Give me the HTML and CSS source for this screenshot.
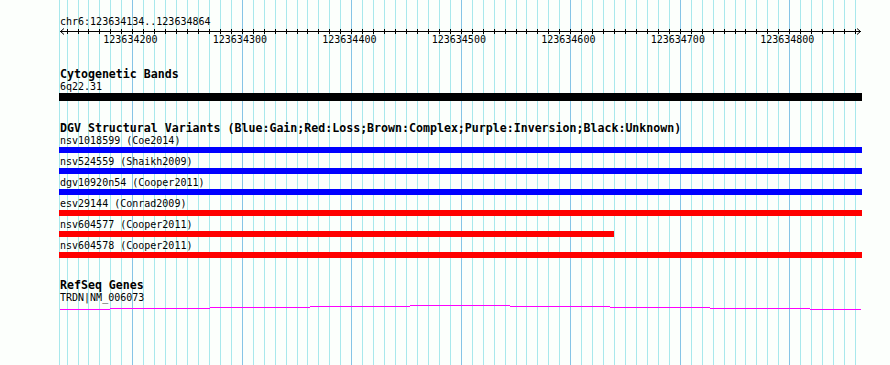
FILE: index.html
```html
<!DOCTYPE html>
<html lang="en">
  <head>
    <meta charset="UTF-8" />
    <title>chr6:123634134..123634864</title>
    <link rel="stylesheet" href="styles.css">
  </head>
  <body>
    <div class="browser">
      <!-- vertical grid: one line every 10 bp, darker every 100 bp -->
      <svg class="grid" width="890" height="365" shape-rendering="crispEdges">
        <path class="minor" d="M59.5 0V365M67.5 0V365M78.5 0V365M88.5 0V365M99.5 0V365M110.5 0V365M121.5 0V365M143.5 0V365M154.5 0V365M165.5 0V365M176.5 0V365M187.5 0V365M198.5 0V365M209.5 0V365M220.5 0V365M231.5 0V365M253.5 0V365M264.5 0V365M275.5 0V365M286.5 0V365M297.5 0V365M307.5 0V365M318.5 0V365M329.5 0V365M340.5 0V365M362.5 0V365M373.5 0V365M384.5 0V365M395.5 0V365M406.5 0V365M417.5 0V365M428.5 0V365M439.5 0V365M450.5 0V365M472.5 0V365M483.5 0V365M494.5 0V365M505.5 0V365M516.5 0V365M526.5 0V365M537.5 0V365M548.5 0V365M559.5 0V365M581.5 0V365M592.5 0V365M603.5 0V365M614.5 0V365M625.5 0V365M636.5 0V365M647.5 0V365M658.5 0V365M669.5 0V365M691.5 0V365M702.5 0V365M713.5 0V365M724.5 0V365M735.5 0V365M745.5 0V365M756.5 0V365M767.5 0V365M778.5 0V365M800.5 0V365M811.5 0V365M822.5 0V365M833.5 0V365M844.5 0V365M855.5 0V365"/>
        <path class="major" d="M132.5 0V365M242.5 0V365M351.5 0V365M461.5 0V365M570.5 0V365M680.5 0V365M789.5 0V365"/>
      </svg>

      <div class="tracks">
        <div class="location">chr6:123634134..123634864</div>
        <svg class="ruler" width="803" height="6" shape-rendering="crispEdges">
          <path d="M1 3.5H802"/>
          <path d="M8.5 1V6M19.5 1V6M29.5 1V6M40.5 1V6M51.5 1V6M62.5 1V6M73.5 1V6M84.5 1V6M95.5 1V6M106.5 1V6M117.5 1V6M128.5 1V6M139.5 1V6M150.5 1V6M161.5 1V6M172.5 1V6M183.5 1V6M194.5 1V6M205.5 1V6M216.5 1V6M227.5 1V6M238.5 1V6M248.5 1V6M259.5 1V6M270.5 1V6M281.5 1V6M292.5 1V6M303.5 1V6M314.5 1V6M325.5 1V6M336.5 1V6M347.5 1V6M358.5 1V6M369.5 1V6M380.5 1V6M391.5 1V6M402.5 1V6M413.5 1V6M424.5 1V6M435.5 1V6M446.5 1V6M457.5 1V6M467.5 1V6M478.5 1V6M489.5 1V6M500.5 1V6M511.5 1V6M522.5 1V6M533.5 1V6M544.5 1V6M555.5 1V6M566.5 1V6M577.5 1V6M588.5 1V6M599.5 1V6M610.5 1V6M621.5 1V6M632.5 1V6M643.5 1V6M654.5 1V6M665.5 1V6M676.5 1V6M686.5 1V6M697.5 1V6M708.5 1V6M719.5 1V6M730.5 1V6M741.5 1V6M752.5 1V6M763.5 1V6M774.5 1V6M785.5 1V6M796.5 1V6"/>
          <path class="arrow" d="M5 0.5L1.5 3.5L5 6.5M798 0.5L801.5 3.5L798 6.5" shape-rendering="auto"/>
        </svg>
        <div class="scale">
          <span>123634200</span>
          <span>123634300</span>
          <span>123634400</span>
          <span>123634500</span>
          <span>123634600</span>
          <span>123634700</span>
          <span>123634800</span>
        </div>

        <div class="track cyto">
          <div class="trackTitle">Cytogenetic Bands</div>
          <div class="featureLabel">6q22.31</div>
          <div class="bar band"></div>
        </div>

        <div class="track dgv">
          <div class="trackTitle">DGV Structural Variants (Blue:Gain;Red:Loss;Brown:Complex;Purple:Inversion;Black:Unknown)</div>
          <div class="featureLabel">nsv1018599 (Coe2014)</div>
          <div class="bar gain"></div>
          <div class="featureLabel">nsv524559 (Shaikh2009)</div>
          <div class="bar gain"></div>
          <div class="featureLabel">dgv10920n54 (Cooper2011)</div>
          <div class="bar gain"></div>
          <div class="featureLabel">esv29144 (Conrad2009)</div>
          <div class="bar loss"></div>
          <div class="featureLabel">nsv604577 (Cooper2011)</div>
          <div class="bar loss" style="width: 555px"></div>
          <div class="featureLabel">nsv604578 (Cooper2011)</div>
          <div class="bar loss"></div>
        </div>

        <div class="track refseq">
          <div class="trackTitle">RefSeq Genes</div>
          <div class="featureLabel">TRDN|NM_006073</div>
          <svg class="gene" width="803" height="8" shape-rendering="crispEdges">
            <path d="M1 6.5H51M51 5.5H151M151 4.5H251M251 3.5H351M351 2.5H451M451 3.5H551M551 4.5H651M651 5.5H751M751 6.5H802"/>
          </svg>
        </div>
      </div>
    </div>
  </body>
</html>
```

FILE: styles.css
```css
* {
  box-sizing: border-box;
}
body {
  margin: 0;
  background: #fcfffc;
  font-family: "DejaVu Sans Mono", "Liberation Mono", monospace;
  font-size: 10px;
  color: #000;
}
.browser {
  position: relative;
  width: 890px;
  height: 365px;
  overflow: hidden;
}
.grid {
  position: absolute;
  left: 0;
  top: 0;
}
.grid path {
  stroke-width: 1;
  fill: none;
}
.grid .minor {
  stroke: #a8e8ec;
}
.grid .major {
  stroke: #86c4e6;
}
.tracks {
  position: relative;
  padding: 16px 0 0 59px;
  width: 862px;
}
.location {
  line-height: 11px;
  padding-left: 1px;
  margin-bottom: 1px;
}
.ruler {
  display: block;
  overflow: visible;
}
.ruler path {
  stroke: #000;
  stroke-width: 1;
  fill: none;
}
.scale {
  display: flex;
  gap: 55.3px;
  margin-left: 44.3px;
  line-height: 11px;
  white-space: nowrap;
}
.trackTitle {
  font-weight: bold;
  font-size: 11.6px;
  line-height: 13px;
  padding-left: 1px;
  white-space: nowrap;
}
.featureLabel {
  line-height: 11px;
  padding-left: 1px;
  white-space: nowrap;
}
.cyto {
  margin-top: 23px;
}
.dgv {
  margin-top: 21px;
}
.refseq {
  margin-top: 21px;
}
.bar {
  width: 803px;
  height: 6px;
  margin: 1px 0 3px;
}
.band {
  height: 8px;
  margin-bottom: 0;
  background: #000;
}
.gain {
  background: #0000ff;
}
.loss {
  background: #ff0000;
}
.gene {
  display: block;
}
.gene path {
  stroke: #ff00ff;
  stroke-width: 1;
  fill: none;
}
```
